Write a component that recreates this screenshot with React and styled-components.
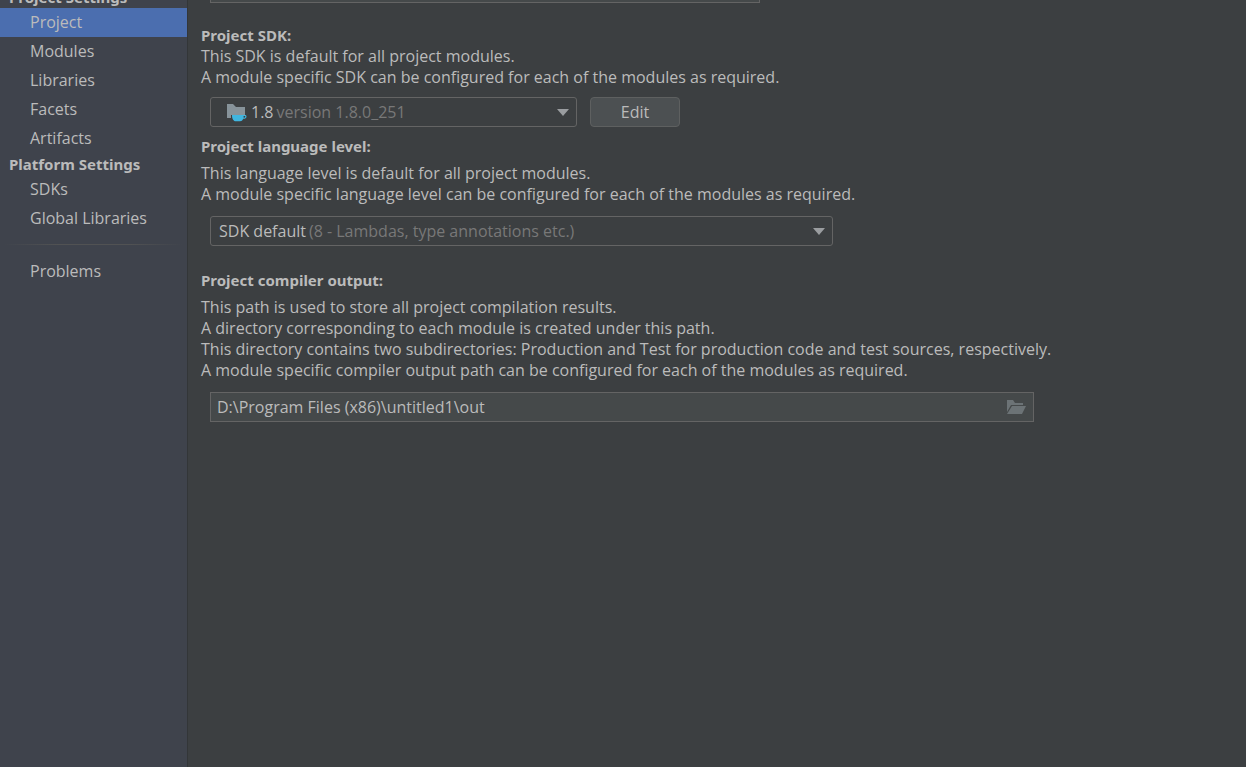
import React, { useState } from 'react';
import styled, { createGlobalStyle, css } from 'styled-components';

const GlobalStyle = createGlobalStyle`
  * {
    box-sizing: border-box;
  }
  body {
    margin: 0;
    background: #3c3f41;
    color: #bbbbbb;
    font-family: 'Open Sans', 'Noto Sans', sans-serif;
    font-size: 16px;
    line-height: 21px;
  }
  button, input, select {
    font: inherit;
    color: inherit;
  }
`;

const Page = styled.div`
  display: flex;
  height: 100vh;
  overflow: hidden;
`;

const Sidebar = styled.nav`
  flex: none;
  width: 188px;
  background: #3f434c;
  border-right: 1px solid #333638;
`;

const SidebarScroll = styled.div`
  margin-top: -14px;
`;

const GroupTitle = styled.h2`
  margin: 0;
  padding-left: 9px;
  font-family: 'Noto Sans', sans-serif;
  font-size: 15px;
  font-weight: bold;
  line-height: 22px;
`;

const NavItem = styled.a`
  display: block;
  padding-left: 30px;
  line-height: 29px;
  color: #bbbbbb;
  text-decoration: none;
  background: ${(props) => (props.$active ? '#4b6eaf' : 'none')};
`;

const Divider = styled.hr`
  height: 1px;
  margin: 11px 4px 12px;
  border: none;
  background: linear-gradient(to right, transparent, #515253 30%, #515253 70%, transparent);
`;

const Main = styled.main`
  flex: 1;
  min-width: 0;
  padding: 0 24px 0 13px;
`;

const MainScroll = styled.form`
  display: flex;
  flex-direction: column;
  margin-top: -36px;
`;

const Section = styled.section`
  margin-top: ${(props) => props.$space}px;
`;

const Title = styled.label`
  display: block;
  margin-bottom: ${(props) => (props.$tight ? 0 : 6)}px;
  font-family: 'Noto Sans', sans-serif;
  font-size: 15px;
  font-weight: bold;
`;

const Description = styled.p`
  margin: 0;
`;

const Controls = styled.div`
  display: flex;
  gap: 13px;
  margin: ${(props) => (props.$tight ? 9 : 11)}px 0 0 9px;
`;

const field = css`
  width: 100%;
  height: 30px;
  border: 1px solid #646464;
  outline: none;
  &:focus-visible {
    border-color: #6a8fc4;
  }
`;

const Input = styled.input`
  ${field}
  padding: 0 32px 0 6px;
  background: #45494a;
`;

const NameInput = styled(Input)`
  max-width: 550px;
`;

const PathField = styled.div`
  display: grid;
  align-items: center;
  width: 100%;
  max-width: 824px;
  > * {
    grid-area: 1 / 1;
  }
`;

const BrowseButton = styled.button`
  display: flex;
  justify-self: end;
  margin-right: 7px;
  padding: 0;
  border: none;
  background: none;
`;

const SelectBox = styled.div`
  display: grid;
  align-items: center;
  width: 100%;
  max-width: ${(props) => props.$width}px;
  > * {
    grid-area: 1 / 1;
  }
`;

const Select = styled.select`
  ${field}
  appearance: none;
  border-radius: 3px;
  background: #3c3f41;
  color: transparent;
  option {
    color: #bbbbbb;
  }
`;

const SelectFace = styled.div`
  display: flex;
  align-items: center;
  padding: 0 8px 0 ${(props) => (props.$icon ? 17 : 9)}px;
  pointer-events: none;
  svg + span {
    margin-left: 4px;
  }
`;

const Hint = styled.span`
  flex: 1;
  margin-left: 3px;
  color: #787878;
  white-space: nowrap;
`;

const Button = styled.button`
  flex: none;
  width: 90px;
  height: 30px;
  padding: 0;
  border: 1px solid #5e6060;
  border-radius: 4px;
  background: #4c5052;
`;

const SdkIcon = () => (
  <svg width="20" height="20" viewBox="0 0 20 20" aria-hidden="true">
    <path fill="#87939a" d="M0 2h6l3 3h9v8H4v3H0z" />
    <path fill="#40b6e0" d="M5 13h13c1 0 1.500.6 1.500 1.500 0 1.500-1.200 2.300-3.200 2.300C15.500 18.500 14.500 19.300 13 19.300H9C6.500 19.300 5 17 5 13z" />
    <path fill="#3c3f41" d="M16.600 14h1.600v1c0 .5-.6.8-1.600.8z" />
  </svg>
);

const FolderIcon = () => (
  <svg width="20" height="16" viewBox="0 0 20 16" aria-hidden="true">
    <path fill="#6c7376" d="M0 1h6l2 3h8v2H4L0 13z" />
    <path fill="#6c7376" d="M5 7h14l-4 8H0z" />
  </svg>
);

const Arrow = () => (
  <svg width="12" height="7" viewBox="0 0 12 7" aria-hidden="true">
    <path fill="#9a9da0" d="M0 0h12L6 7z" />
  </svg>
);

const projectItems = ['Project', 'Modules', 'Libraries', 'Facets', 'Artifacts'];
const platformItems = ['SDKs', 'Global Libraries'];

const App = () => {
  const [active, setActive] = useState('Project');
  const [name, setName] = useState('');
  const [output, setOutput] = useState('D:\\Program Files (x86)\\untitled1\\out');

  const renderItem = (item) => (
    <NavItem
      key={item}
      href="#"
      $active={active === item}
      onClick={(e) => {
        e.preventDefault();
        setActive(item);
      }}
    >
      {item}
    </NavItem>
  );

  return (
    <>
      <GlobalStyle />
      <Page>
        <Sidebar>
          <SidebarScroll>
            <GroupTitle>Project Settings</GroupTitle>
            {projectItems.map(renderItem)}
            <GroupTitle>Platform Settings</GroupTitle>
            {platformItems.map(renderItem)}
            <Divider />
            {renderItem('Problems')}
          </SidebarScroll>
        </Sidebar>
        <Main>
          <MainScroll onSubmit={(e) => e.preventDefault()}>
            <Controls $tight>
              <NameInput
                aria-label="Project name"
                value={name}
                onChange={(e) => setName(e.target.value)}
              />
            </Controls>
            <Section $space={22}>
              <Title $tight htmlFor="sdk">Project SDK:</Title>
              <Description>
                This SDK is default for all project modules.
                <br />
                A module specific SDK can be configured for each of the modules as required.
              </Description>
              <Controls $tight>
                <SelectBox $width={367}>
                  <Select id="sdk">
                    <option>1.8 version 1.8.0_251</option>
                  </Select>
                  <SelectFace $icon aria-hidden="true">
                    <SdkIcon />
                    <span>1.8</span>
                    <Hint>version 1.8.0_251</Hint>
                    <Arrow />
                  </SelectFace>
                </SelectBox>
                <Button type="button">Edit</Button>
              </Controls>
            </Section>
            <Section $space={9}>
              <Title htmlFor="level">Project language level:</Title>
              <Description>
                This language level is default for all project modules.
                <br />
                A module specific language level can be configured for each of the modules as required.
              </Description>
              <Controls>
                <SelectBox $width={623}>
                  <Select id="level">
                    <option>SDK default (8 - Lambdas, type annotations etc.)</option>
                  </Select>
                  <SelectFace aria-hidden="true">
                    <span>SDK default</span>
                    <Hint>(8 - Lambdas, type annotations etc.)</Hint>
                    <Arrow />
                  </SelectFace>
                </SelectBox>
              </Controls>
            </Section>
            <Section $space={24}>
              <Title htmlFor="output">Project compiler output:</Title>
              <Description>
                This path is used to store all project compilation results.
                <br />
                A directory corresponding to each module is created under this path.
                <br />
                This directory contains two subdirectories: Production and Test for production code and test sources, respectively.
                <br />
                A module specific compiler output path can be configured for each of the modules as required.
              </Description>
              <Controls>
                <PathField>
                  <Input id="output" value={output} onChange={(e) => setOutput(e.target.value)} />
                  <BrowseButton type="button" aria-label="Browse">
                    <FolderIcon />
                  </BrowseButton>
                </PathField>
              </Controls>
            </Section>
          </MainScroll>
        </Main>
      </Page>
    </>
  );
};

export default App;
